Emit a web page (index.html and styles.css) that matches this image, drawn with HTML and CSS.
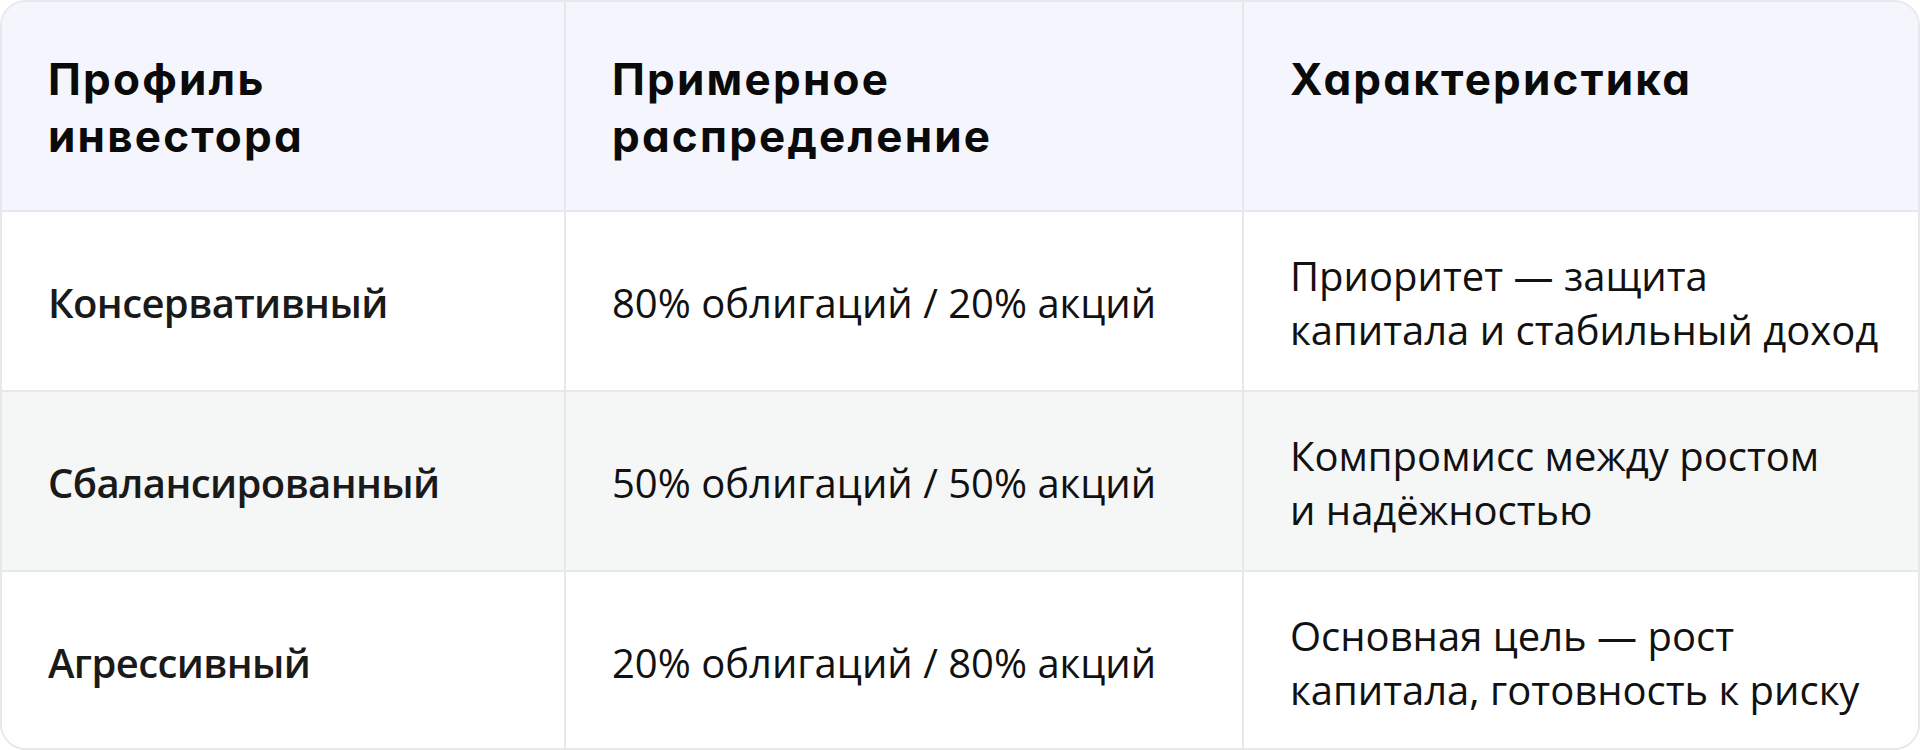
FILE: index.html
```html
<!DOCTYPE html>
<html lang="ru">
<head>
<meta charset="utf-8">
<title>Профили инвесторов</title>
<link rel="stylesheet" href="styles.css">
</head>
<body>
<div class="wrap">
  <table class="profiles">
    <colgroup>
      <col class="c1">
      <col class="c2">
      <col class="c3">
    </colgroup>
    <thead>
      <tr>
        <th>Профиль<br>инвестора</th>
        <th>Примерное<br>распределение</th>
        <th>Характеристика</th>
      </tr>
    </thead>
    <tbody>
      <tr>
        <td class="name">Консервативный</td>
        <td>80% облигаций / 20% акций</td>
        <td>Приоритет — защита<br>капитала и стабильный доход</td>
      </tr>
      <tr class="alt">
        <td class="name">Сбалансированный</td>
        <td>50% облигаций / 50% акций</td>
        <td>Компромисс между ростом<br>и надёжностью</td>
      </tr>
      <tr class="last">
        <td class="name">Агрессивный</td>
        <td>20% облигаций / 80% акций</td>
        <td>Основная цель — рост<br>капитала, готовность к риску</td>
      </tr>
    </tbody>
  </table>
</div>
</body>
</html>
```

FILE: styles.css
```css
html, body {
  margin: 0;
  padding: 0;
  background: #ffffff;
}

.wrap {
  width: 1920px;
}

.profiles {
  width: 1920px;
  table-layout: fixed;
  border-collapse: separate;
  border-spacing: 0;
  border: 2px solid #e7e8ec;
  border-radius: 26px;
  overflow: hidden;
  box-sizing: border-box;
}

.c1 { width: 564px; }
.c2 { width: 678px; }
.c3 { width: 674px; }

.profiles th,
.profiles td {
  text-align: left;
  white-space: nowrap;
  padding: 0 16px 0 46px;
  border-right: 2px solid #e7e8ec;
  border-bottom: 2px solid #e7e8ec;
}

.profiles th:last-child,
.profiles td:last-child {
  border-right: none;
}

.profiles tbody tr:last-child td {
  border-bottom: none;
}

.profiles th {
  background: #f5f6fd;
  color: #0a0a0a;
  font-family: Inter, "Noto Sans", sans-serif;
  font-feature-settings: "cv11" 1;
  font-weight: 700;
  font-size: 44px;
  line-height: 57px;
  letter-spacing: 2.2px;
  vertical-align: top;
  padding-top: 49px;
  padding-bottom: 45px;
}

.profiles td {
  background: #ffffff;
  color: #111111;
  font-family: "Open Sans", "Noto Sans", sans-serif;
  font-weight: 400;
  font-size: 40px;
  line-height: 54px;
  vertical-align: middle;
  padding-top: 37px;
  padding-bottom: 33px;
}

.profiles tr.last td {
  padding-bottom: 31px;
}

.profiles td.name {
  font-weight: 600;
  color: #1a1a1a;
  letter-spacing: -0.6px;
}

.profiles tr.alt td {
  background: #f5f6f6;
}
```
